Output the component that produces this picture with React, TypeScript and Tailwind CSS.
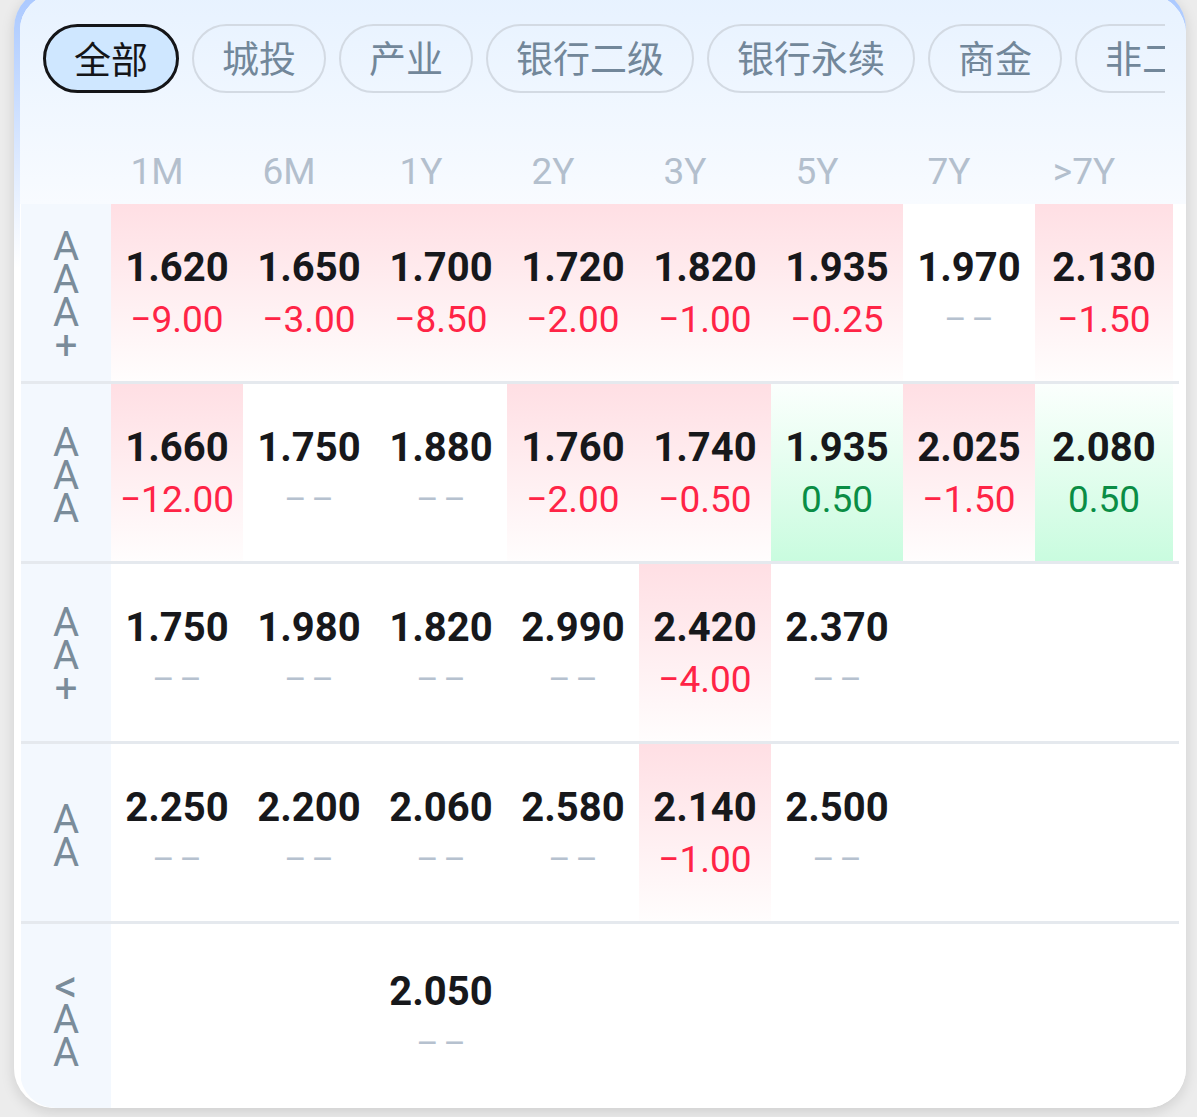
import React from "react";

type Cell = { v: string; c?: string | null; bg?: "p" | "g" | "n" } | null;

const chips = ["全部", "城投", "产业", "银行二级", "银行永续", "商金", "非二永"];
const tenors = ["1M", "6M", "1Y", "2Y", "3Y", "5Y", "7Y", ">7Y"];

const rows: { label: string[]; cells: Cell[] }[] = [
  {
    label: ["A", "A", "A", "+"],
    cells: [
      { v: "1.620", c: "−9.00", bg: "p" },
      { v: "1.650", c: "−3.00", bg: "p" },
      { v: "1.700", c: "−8.50", bg: "p" },
      { v: "1.720", c: "−2.00", bg: "p" },
      { v: "1.820", c: "−1.00", bg: "p" },
      { v: "1.935", c: "−0.25", bg: "p" },
      { v: "1.970", c: null, bg: "n" },
      { v: "2.130", c: "−1.50", bg: "p" },
    ],
  },
  {
    label: ["A", "A", "A"],
    cells: [
      { v: "1.660", c: "−12.00", bg: "p" },
      { v: "1.750", c: null, bg: "n" },
      { v: "1.880", c: null, bg: "n" },
      { v: "1.760", c: "−2.00", bg: "p" },
      { v: "1.740", c: "−0.50", bg: "p" },
      { v: "1.935", c: "0.50", bg: "g" },
      { v: "2.025", c: "−1.50", bg: "p" },
      { v: "2.080", c: "0.50", bg: "g" },
    ],
  },
  {
    label: ["A", "A", "+"],
    cells: [
      { v: "1.750", c: null, bg: "n" },
      { v: "1.980", c: null, bg: "n" },
      { v: "1.820", c: null, bg: "n" },
      { v: "2.990", c: null, bg: "n" },
      { v: "2.420", c: "−4.00", bg: "p" },
      { v: "2.370", c: null, bg: "n" },
      null,
      null,
    ],
  },
  {
    label: ["A", "A"],
    cells: [
      { v: "2.250", c: null, bg: "n" },
      { v: "2.200", c: null, bg: "n" },
      { v: "2.060", c: null, bg: "n" },
      { v: "2.580", c: null, bg: "n" },
      { v: "2.140", c: "−1.00", bg: "p" },
      { v: "2.500", c: null, bg: "n" },
      null,
      null,
    ],
  },
  {
    label: ["<", "A", "A"],
    cells: [null, null, { v: "2.050", c: null, bg: "n" }, null, null, null, null, null],
  },
];

const num = { fontFamily: "Roboto, 'Liberation Sans', sans-serif" };
const cjk = { fontFamily: "'Noto Sans CJK SC', 'Noto Sans', sans-serif" };

function CellView({ cell }: { cell: Cell }) {
  if (!cell) return <div />;
  const bgClass =
    cell.bg === "p"
      ? "bg-linear-to-b from-[#ffdfe4] to-[#fffdfd]"
      : cell.bg === "g"
      ? "bg-linear-to-b from-[#fbfffd] to-[#c9fcdf]"
      : "";
  const isNeg = cell.c ? cell.c.startsWith("−") : false;
  return (
    <div className={`flex flex-col items-center justify-center pb-[1px] ${bgClass}`} style={num}>
      <div className="text-[40px] leading-[55px] font-bold text-[#17181b]">{cell.v}</div>
      {cell.c ? (
        <div
          className={`text-[37px] leading-[49px] ${isNeg ? "text-[#ff2446]" : "text-[#0a8d45]"}`}
        >
          {cell.c}
        </div>
      ) : (
        <div className="text-[34px] leading-[49px] text-[#b6c1cf] tracking-[5px] pl-[5px]">––</div>
      )}
    </div>
  );
}

export default function App() {
  return (
    <div className="w-[1197px] h-[1117px] bg-[#ececec] overflow-hidden">
      <div className="ml-[14px] mt-[-12px] w-[1172px] h-[1120px] rounded-[40px] bg-linear-to-b from-[#a8c7ff] to-white to-[25%] pl-[6px] pt-[6px] shadow-[0_4px_14px_rgba(0,0,0,0.13)]">
        <div className="h-full rounded-[36px] rounded-r-[40px] bg-white overflow-hidden flex flex-col">
          <div className="bg-linear-to-b from-[#e7f2ff] to-[#f8fbff]">
            <div className="pt-[30px] pl-[23px]">
              <div className="w-[1122px] overflow-hidden">
                <div className="flex gap-[13px] w-max" style={cjk}>
                  {chips.map((c, i) => (
                    <div
                      key={c}
                      className={
                        i === 0
                          ? "h-[69px] px-[28px] rounded-full border-[3px] border-[#141518] bg-[#cfe7ff] text-[#141518] text-[37px] leading-[62px] whitespace-nowrap"
                          : "h-[69px] px-[28px] rounded-full border-[2.5px] border-[#d3dae3] text-[#72879a] text-[37px] leading-[63px] whitespace-nowrap"
                      }
                    >
                      {c}
                    </div>
                  ))}
                </div>
              </div>
            </div>
            <div
              className="ml-[71px] w-[1062px] h-[111px] pt-[55px] grid grid-cols-[repeat(7,132px)_138px]"
              style={num}
            >
              {tenors.map((t) => (
                <div key={t} className="text-center text-[37px] leading-[48px] text-[#b3bfcd]">
                  {t}
                </div>
              ))}
            </div>
          </div>
          <div className="flex-1 flex flex-col ml-[1px] mr-[7px]">
            {rows.map((r, ri) => (
              <div
                key={ri}
                className={
                  ri === rows.length - 1
                    ? "flex flex-1"
                    : "flex h-[180px] border-b-[3px] border-[#e5e9ee]"
                }
              >
                <div
                  className="w-[90px] bg-[#f3f8fe] flex flex-col items-center justify-center pt-[6px] text-[40px] leading-[33px] text-[#7a8c9a]"
                  style={num}
                >
                  {r.label.map((ch, k) => (
                    <div key={k} className={ch === "<" ? "text-[46px]" : ""}>
                      {ch}
                    </div>
                  ))}
                </div>
                <div className="w-[1062px] grid grid-cols-[repeat(7,132px)_138px]">
                  {r.cells.map((c, ci) => (
                    <CellView key={ci} cell={c} />
                  ))}
                </div>
              </div>
            ))}
          </div>
        </div>
      </div>
    </div>
  );
}
